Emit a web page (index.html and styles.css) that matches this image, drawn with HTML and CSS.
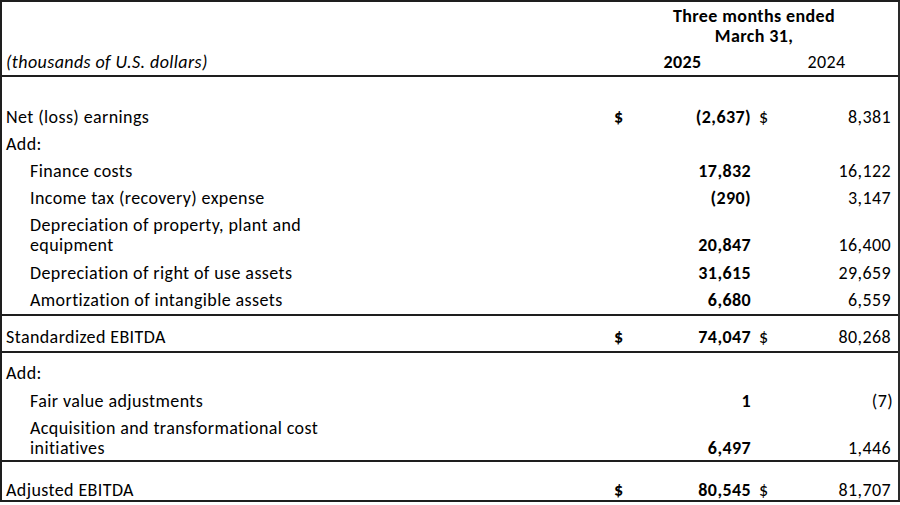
FILE: index.html
```html
<!DOCTYPE html>
<html lang="en">
<head>
<meta charset="utf-8">
<title>EBITDA reconciliation</title>
<link rel="stylesheet" href="styles.css">
</head>
<body>
<div class="sheet">
<table class="fin">
<colgroup>
<col class="c-label"><col class="c-d1"><col class="c-v1"><col class="c-d2"><col class="c-v2">
</colgroup>
<thead>
<tr class="h1"><th></th><th colspan="4" class="period">Three months ended<br>March 31,</th></tr>
<tr class="h2 rule"><th class="units">(thousands of U.S. dollars)</th><th colspan="2" class="yr b">2025</th><th colspan="2" class="yr">2024</th></tr>
</thead>
<tbody>
<tr class="first"><td>Net (loss) earnings</td><td class="cur b">$</td><td class="num b">(2,637)</td><td class="cur">$</td><td class="num">8,381</td></tr>
<tr><td>Add:</td><td></td><td></td><td></td><td></td></tr>
<tr><td class="ind">Finance costs</td><td></td><td class="num b">17,832</td><td></td><td class="num">16,122</td></tr>
<tr><td class="ind">Income tax (recovery) expense</td><td></td><td class="num b">(290)</td><td></td><td class="num">3,147</td></tr>
<tr class="wrap"><td class="ind">Depreciation of property, plant and<br>equipment</td><td></td><td class="num b">20,847</td><td></td><td class="num">16,400</td></tr>
<tr><td class="ind">Depreciation of right of use assets</td><td></td><td class="num b">31,615</td><td></td><td class="num">29,659</td></tr>
<tr class="rule"><td class="ind">Amortization of intangible assets</td><td></td><td class="num b">6,680</td><td></td><td class="num">6,559</td></tr>
<tr class="rule total"><td>Standardized EBITDA</td><td class="cur b">$</td><td class="num b">74,047</td><td class="cur">$</td><td class="num">80,268</td></tr>
<tr class="add2"><td>Add:</td><td></td><td></td><td></td><td></td></tr>
<tr class="fair"><td class="ind">Fair value adjustments</td><td></td><td class="num b">1</td><td></td><td class="num neg">(7)</td></tr>
<tr class="rule acq"><td class="ind">Acquisition and transformational cost<br>initiatives</td><td></td><td class="num b">6,497</td><td></td><td class="num">1,446</td></tr>
<tr class="final"><td>Adjusted EBITDA</td><td class="cur b">$</td><td class="num b">80,545</td><td class="cur">$</td><td class="num">81,707</td></tr>
</tbody>
</table>
</div>
</body>
</html>
```
FILE: styles.css
```css
html, body {
  margin: 0;
  background: #ffffff;
}
body {
  font-family: Carlito, "Open Sans", "Liberation Sans", sans-serif;
  font-size: 18px;
  letter-spacing: 0.4px;
  color: #000000;
}
.sheet {
  width: 896px;
  border: 2px solid #1e1e1e;
  border-right-width: 3px;
  border-right-color: #2a2a2a;
}
.fin {
  width: 100%;
  border-collapse: collapse;
  table-layout: fixed;
}
.c-label { width: 608px; }
.c-d1 { width: 24px; }
.c-v1 { width: 121px; }
.c-d2 { width: 20px; }
.c-v2 { width: 123px; }

.fin th,
.fin td {
  padding: 9px 4px 0;
  line-height: 18px;
  vertical-align: bottom;
  font-weight: normal;
  white-space: nowrap;
  text-align: left;
}
.fin .b { font-weight: bold; }
.fin .num { text-align: right; padding-right: 4px; }
.fin td.num:last-child { padding-right: 7px; }
.fin td.neg:last-child { padding-right: 5px; }
.fin .cur { text-align: left; padding-left: 4px; }
.fin .ind { padding-left: 28px; }

.h1 th { padding-top: 4px; line-height: 20px; }
.fin .period { text-align: center; font-weight: bold; }
.h2 th { padding-top: 7px; }
.fin .units { font-style: italic; }
.fin .yr { text-align: center; }

.rule th,
.rule td {
  border-bottom: 2px solid #1e1e1e;
  padding-bottom: 5px;
}
.h2.rule th { padding-bottom: 4px; }

.first td { padding-top: 31px; }
.wrap td { padding-top: 8px; line-height: 20px; }
.total td { padding-top: 12px; }
.add2 td { padding-top: 11px; }
.fair td { padding-top: 10px; }
.acq td { padding-top: 8px; padding-bottom: 2px; line-height: 20px; }
.final td { padding-top: 19px; padding-bottom: 1px; }
```
